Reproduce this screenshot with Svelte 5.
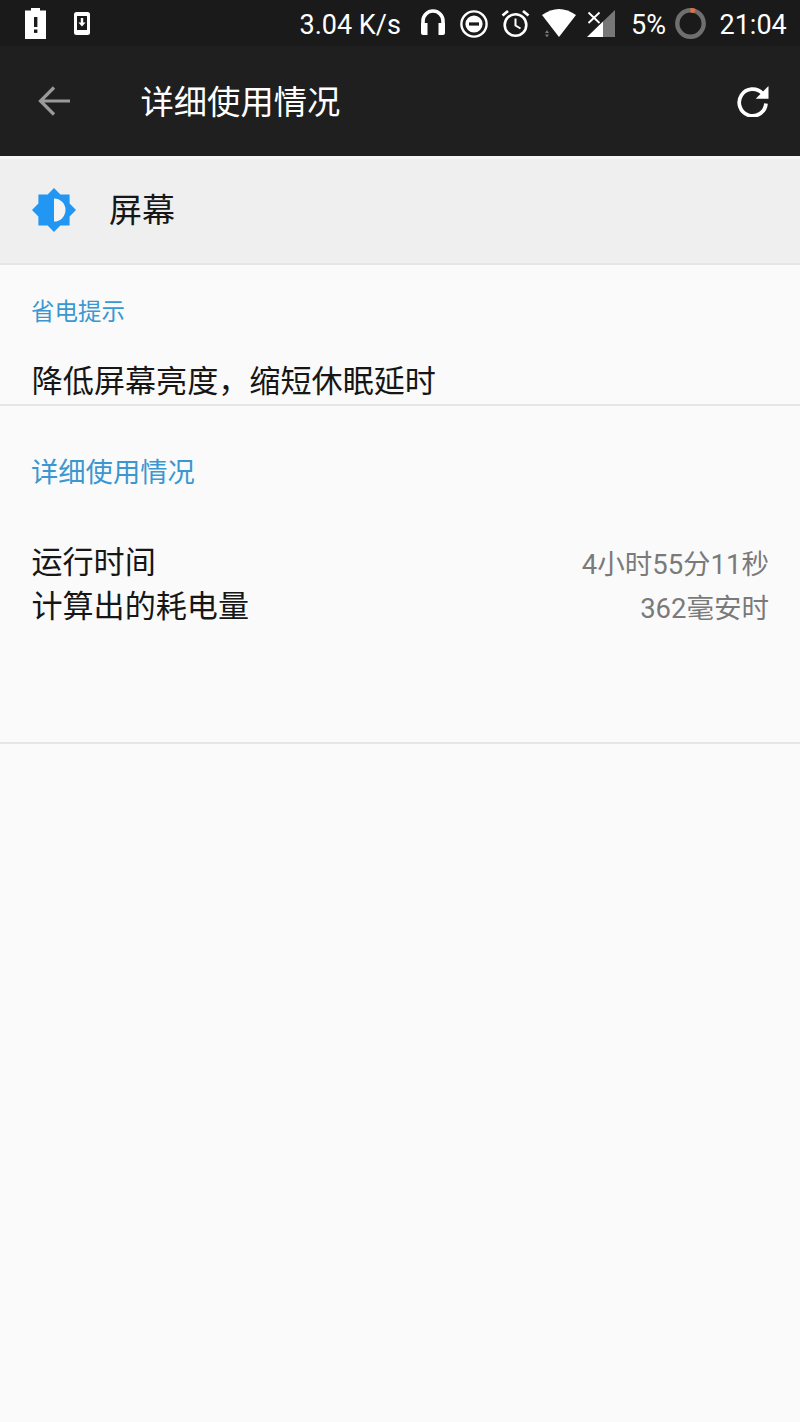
<script>
  const stats = [
    { label: "运行时间", value: "4小时55分11秒" },
    { label: "计算出的耗电量", value: "362毫安时" }
  ];
</script>

<div class="page">
  <div class="status">
    <svg class="ic battery" viewBox="0 0 21 31">
      <path d="M6 0h9v2.5h6V31H0V2.5h6z" fill="#fff" />
      <rect x="9" y="9" width="3.4" height="10" fill="#1a1a1a" />
      <rect x="9" y="21.5" width="3.4" height="3.4" fill="#1a1a1a" />
    </svg>
    <svg class="ic phone" viewBox="0 0 16 23">
      <rect width="16" height="23" rx="2.5" fill="#fff" />
      <rect x="3" y="4" width="10" height="14" fill="#1a1a1a" />
      <path d="M6.8 6h2.4v4.5h2.4L8 14.5l-3.6-4h2.4z" fill="#fff" />
    </svg>
    <span class="speed">3.04 K/s</span>
    <svg class="ic phones" viewBox="0 0 26 26">
      <path d="M3 15V12a10 10 0 0 1 20 0v3" fill="none" stroke="#fff" stroke-width="3.6" />
      <path d="M1 14h6.500v12H3a2 2 0 0 1-2-2zM25 14h-6.500v12H23a2 2 0 0 0 2-2z" fill="#fff" />
    </svg>
    <svg class="ic dnd" viewBox="0 0 28 28">
      <circle cx="14" cy="14" r="12.6" fill="none" stroke="#fff" stroke-width="2.4" />
      <circle cx="14" cy="14" r="8.6" fill="#fff" />
      <rect x="9" y="12.4" width="10" height="3.2" fill="#1a1a1a" />
    </svg>
    <svg class="ic alarm" viewBox="0 0 29 29">
      <circle cx="14.5" cy="16" r="10.8" fill="none" stroke="#fff" stroke-width="2.6" />
      <path d="M14.5 9.500V16.500l5 3" fill="none" stroke="#fff" stroke-width="2" />
      <path d="M1.500 6.500L7 2M27.500 6.500L22 2" fill="none" stroke="#fff" stroke-width="2.8" />
    </svg>
    <svg class="ic wifi" viewBox="0 0 34 28">
      <path d="M0 6Q17 -6 34 6L17 28z" fill="#fff" />
      <path d="M3 24l2-3 2 3zM3 25.500l2 3 2-3z" fill="#777" />
    </svg>
    <svg class="ic signal" viewBox="0 0 28 27">
      <path d="M28 0V27H16V11.600z" fill="#777" />
      <path d="M16 11.600V27H0z" fill="#fff" />
      <path d="M1.500 2.500l11 10.500M12.500 2.500l-11 10.500" stroke="#fff" stroke-width="1.9" />
    </svg>
    <span class="pct">5%</span>
    <svg class="ic ring" viewBox="0 0 31 31">
      <circle cx="15.500" cy="15.500" r="13.200" fill="none" stroke="#6f6f6f" stroke-width="4.4" />
      <path d="M15.500 2.300a13.200 13.200 0 0 1 4.400 .75" fill="none" stroke="#e8703f" stroke-width="4.4" />
    </svg>
    <span class="clock">21:04</span>
  </div>

  <div class="toolbar">
    <svg class="back" viewBox="0 0 32 30">
      <path d="M32 15H3M16 1.500L2.500 15 16 28.500" fill="none" stroke="#9a9a9a" stroke-width="3.2" />
    </svg>
    <span class="title">详细使用情况</span>
    <svg class="refresh" viewBox="0 0 32 32">
      <path d="M25.500 8.400A13.400 13.400 0 1 0 29 18.500" fill="none" stroke="#fff" stroke-width="3.7" />
      <path d="M31.500 1v12.800H18.700z" fill="#fff" />
    </svg>
  </div>

  <div class="app-row">
    <svg class="sun" viewBox="0 0 44 44">
      <path d="M22 0l6.400 6.400H37.600V15.600L44 22l-6.400 6.400V37.600H28.400L22 44l-6.400-6.400H6.400V28.400L0 22l6.400-6.400V6.400H15.600z" fill="#2196f3" />
      <path d="M22 10.500a11.500 11.500 0 0 1 0 23z" fill="#f4f4f4" />
    </svg>
    <span class="app-name">屏幕</span>
  </div>

  <section class="tips">
    <h2 class="small">省电提示</h2>
    <p class="tip">降低屏幕亮度，缩短休眠延时</p>
  </section>

  <section class="usage">
    <h2>详细使用情况</h2>
    <div class="rows">
      {#each stats as s}
        <div class="row">
          <span class="label">{s.label}</span>
          <span class="value">{s.value}</span>
        </div>
      {/each}
    </div>
  </section>
</div>

<style>
  :global(body) {
    margin: 0;
    background: #fafafa;
  }

  .page {
    width: 800px;
    height: 1422px;
    background: #fafafa;
    overflow: hidden;
    font-family: "Noto Sans CJK SC", Roboto, sans-serif;
  }

  .status {
    height: 46px;
    background: #1a1a1a;
    display: flex;
    align-items: center;
    color: #fff;
    font-family: Roboto, "Noto Sans CJK SC", sans-serif;
    font-size: 27px;
    padding-left: 25px;
    box-sizing: border-box;
  }
  .status span {
    margin-top: 4px;
  }
  .ic {
    flex: none;
    display: block;
  }
  .battery {
    width: 21px;
    height: 31px;
  }
  .phone {
    width: 16px;
    height: 23px;
    margin-left: 28px;
  }
  .speed {
    margin-left: 209.500px;
    width: 103.500px;
    white-space: nowrap;
  }
  .phones {
    width: 26px;
    height: 26px;
    margin-left: 17px;
    margin-top: -2px;
  }
  .dnd {
    width: 28px;
    height: 28px;
    margin-left: 14px;
    margin-top: 2px;
  }
  .alarm {
    width: 29px;
    height: 29px;
    margin-left: 13px;
  }
  .wifi {
    width: 34px;
    height: 28px;
    margin-left: 12px;
  }
  .signal {
    width: 28px;
    height: 27px;
    margin-left: 11px;
  }
  .pct {
    margin-left: 16px;
    width: 35px;
    white-space: nowrap;
  }
  .ring {
    width: 31px;
    height: 31px;
    margin-left: 9px;
    margin-top: 1px;
  }
  .clock {
    margin-left: 13.500px;
    white-space: nowrap;
  }

  .toolbar {
    height: 109px;
    background: #1f1f1f;
    display: flex;
    align-items: center;
    border-bottom: 1px solid #8c8c8c;
    padding-left: 38px;
    padding-bottom: 1px;
    box-sizing: content-box;
    margin-bottom: -1px;
  }
  .back {
    width: 32px;
    height: 30px;
    flex: none;
  }
  .title {
    margin-left: 70.500px;
    margin-bottom: 2px;
    color: #fff;
    font-size: 33.300px;
    line-height: 1;
    white-space: nowrap;
  }
  .refresh {
    width: 32px;
    height: 32px;
    margin-left: auto;
    margin-right: 31px;
    flex: none;
  }

  .app-row {
    height: 109px;
    box-sizing: border-box;
    background: #efefef;
    border-top: 3px solid #f6f6f6;
    border-bottom: 2px solid #e5e5e5;
    display: flex;
    align-items: center;
    padding: 0 0 2px 32px;
  }
  .sun {
    width: 44px;
    height: 44px;
    flex: none;
  }
  .app-name {
    margin-left: 33px;
    margin-bottom: 3px;
    font-size: 33px;
    line-height: 1;
    color: #161616;
  }

  .tips {
    height: 141px;
    box-sizing: border-box;
    border-bottom: 2px solid #e6e6e6;
    padding: 34px 31px 0;
  }
  h2 {
    margin: 0;
    font-weight: 400;
    color: #3a97d0;
    font-size: 27.300px;
    line-height: 1;
  }
  h2.small {
    font-size: 23.500px;
  }
  .tip {
    margin: 40px 0 0 0.700px;
    font-size: 31.100px;
    line-height: 1;
    color: #161616;
    white-space: nowrap;
  }

  .usage {
    height: 338px;
    box-sizing: border-box;
    border-bottom: 2px solid #e6e6e6;
    padding: 51px 31px 0;
  }
  .rows {
    margin-top: 60px;
    display: flex;
    flex-direction: column;
    gap: 13px;
  }
  .row {
    display: flex;
    justify-content: space-between;
    align-items: center;
    height: 31px;
  }
  .label {
    font-size: 31.100px;
    line-height: 1;
    margin-left: 0.400px;
    color: #161616;
    white-space: nowrap;
  }
  .value {
    font-family: Roboto, "Noto Sans CJK SC", sans-serif;
    font-size: 27.500px;
    line-height: 1;
    margin-top: 10px;
    color: #7a7a7a;
    white-space: nowrap;
  }
</style>
